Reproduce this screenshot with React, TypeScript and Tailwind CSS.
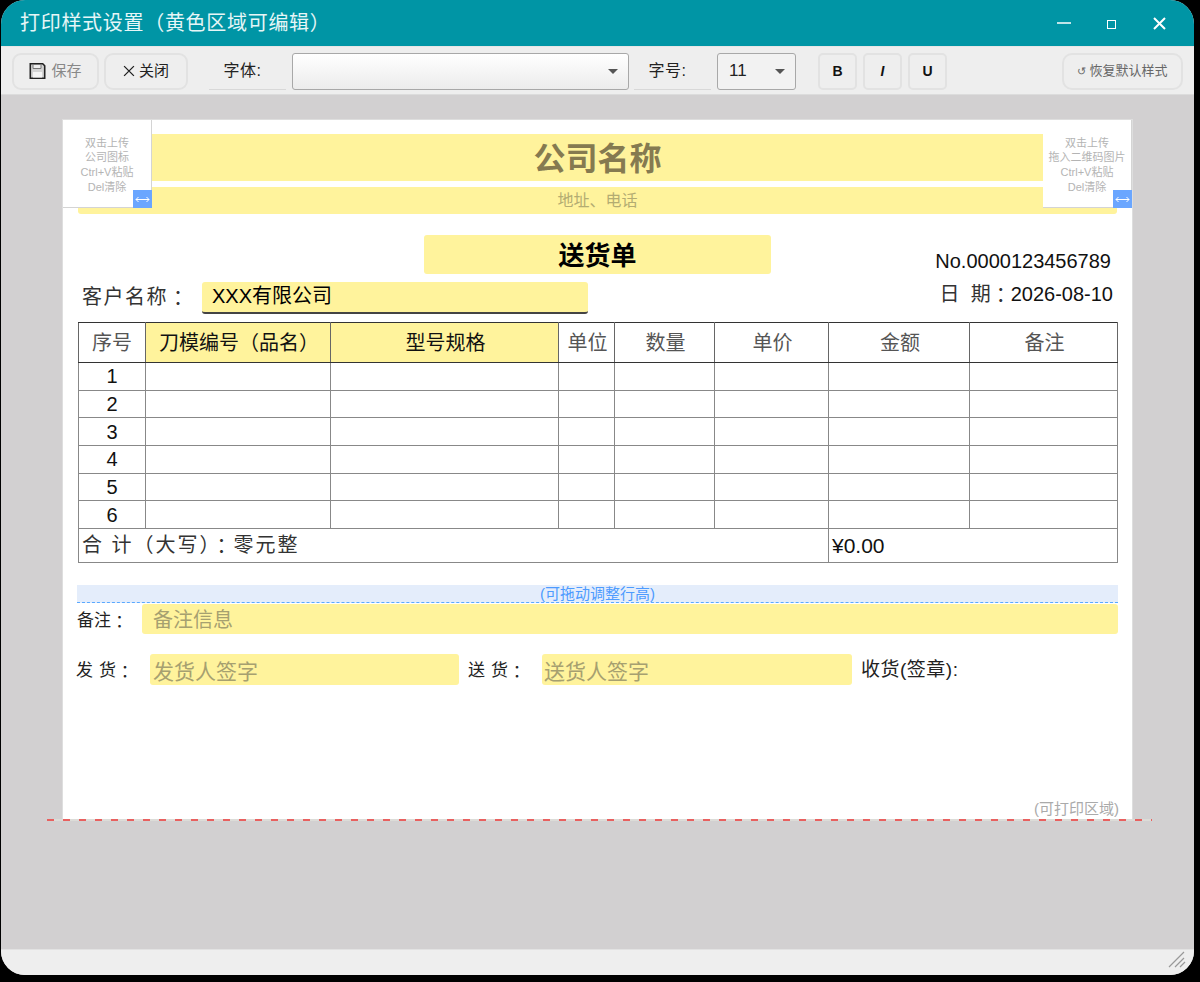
import React from 'react';

const cjk = "font-['Liberation_Sans','Noto_Sans_CJK_SC',sans-serif]";
const yellow = 'bg-[#fff39c]';

const columns = [67, 185, 228, 56, 100, 114, 141, 148];
const headers = ['序号', '刀模编号（品名）', '型号规格', '单位', '数量', '单价', '金额', '备注'];
const rows = [1, 2, 3, 4, 5, 6];

// the full-width colon sits in the middle of its box in the reference, as in the TC face
const Colon = () => <span className="align-[-2px] font-['Noto_Sans_CJK_TC',sans-serif]">：</span>;

const ToolLabel = ({ text }: { text: string }) => (
  <div className="flex h-[37px] w-[77px] items-center justify-center border-b border-[#d8d8d8] pr-[10px] text-[16px] tracking-[0.5px] text-[#222]">
    {text}
  </div>
);

const Caret = () => <span className="h-0 w-0 border-x-[5px] border-t-[5px] border-x-transparent border-t-[#555]" />;

const StyleButton = ({ text, className }: { text: string; className?: string }) => (
  <button className={`flex h-[37px] w-[39px] items-center justify-center rounded-[5px] border-2 border-[#e2e2e2] bg-[#eeeeee] text-[14px] font-bold text-[#111] ${className ?? ''}`}>
    {text}
  </button>
);

const UploadBox = ({ lines }: { lines: string[] }) => (
  <div className="relative flex h-[88px] w-[89px] flex-col items-center justify-center border-r border-b border-[#d4d4d4] bg-white pt-[3px] text-[11px] leading-[14.6px] text-[#b4b4b4]">
    {lines.map((line) => (
      <div key={line}>{line}</div>
    ))}
    <div className="absolute right-[-1px] bottom-[-1px] flex h-[18px] w-[19px] items-center justify-center bg-[#6aa6ff]">
      <svg width="15" height="7" viewBox="0 0 15 7" fill="none" stroke="white" strokeWidth="1">
        <path d="M1 3.5h13M3.5 1 1 3.5 3.5 6M11.500 1 14 3.500 11.500 6" />
      </svg>
    </div>
  </div>
);

const App: React.FC = () => {
  return (
    <div className={`h-[982px] w-[1200px] overflow-hidden bg-black pt-0 pr-[6px] pb-[7px] pl-px ${cjk}`}>
      <div className="flex h-full flex-col overflow-hidden rounded-t-[24px] rounded-b-[24px] bg-[#eeeeee]">
        {/* title bar */}
        <div className="flex h-[46px] shrink-0 items-center justify-between bg-[#0095a5] pl-[19px] text-white">
          <div className="text-[20px] tracking-[0.7px] text-[#e6f6f7]">打印样式设置（黄色区域可编辑）</div>
          <div className="flex items-center pr-[28px]">
            <svg width="14" height="2" viewBox="0 0 14 2">
              <path d="M0 1h14" stroke="white" strokeWidth="1.500" />
            </svg>
            <div className="mt-[3px] ml-[36px] h-[9px] w-[9px] border border-white" />
            <svg className="ml-[37px]" width="13" height="13" viewBox="0 0 13 13">
              <path d="M1 1l11 11M12 1 1 12" stroke="white" strokeWidth="2" />
            </svg>
          </div>
        </div>

        {/* toolbar */}
        <div className="flex h-[48px] shrink-0 items-center border-t border-[#e6e6e6] bg-[#eeeeee] pt-[1px] pl-[11px]">
          <button className="flex h-[37px] w-[87px] items-center justify-center gap-[5px] rounded-[9px] border-2 border-[#e2e2e2] text-[15px] text-[#888]">
            <svg width="17" height="16" viewBox="0 0 16 16">
              <path d="M.8.8h12.400l2 2v12.400H.8z" fill="#d4d4d4" stroke="#222" strokeWidth="1.600" />
              <path d="M3.500 1.500h8v4h-8z" fill="#efefef" stroke="#777" />
              <path d="M3.500 9h9v5.500h-9z" fill="#f4f4f4" />
            </svg>
            保存
          </button>
          <button className="ml-[5px] flex h-[37px] w-[84px] items-center justify-center gap-[4px] rounded-[9px] border-2 border-[#e2e2e2] text-[15px] text-[#222]">
            <svg width="12" height="12" viewBox="0 0 11 11">
              <path d="M1 1l9 9M10 1 1 10" stroke="#222" strokeWidth="1.200" />
            </svg>
            关闭
          </button>
          <div className="ml-[21px]">
            <ToolLabel text="字体:" />
          </div>
          <div className="ml-[6px] flex h-[37px] w-[337px] items-center justify-end rounded-[3px] border border-[#a8a8a8] bg-gradient-to-b from-white to-[#ececec] pr-[10px]">
            <Caret />
          </div>
          <div className="ml-[5px]">
            <ToolLabel text="字号:" />
          </div>
          <div className="ml-[6px] flex h-[37px] w-[79px] items-center justify-between rounded-[3px] border border-[#a8a8a8] bg-[#f2f2f2] pr-[10px] pl-[11px] text-[17px] text-[#222]">
            11
            <Caret />
          </div>
          <StyleButton text="B" className="ml-[22px]" />
          <StyleButton text="I" className="ml-[6px] italic" />
          <StyleButton text="U" className="ml-[6px]" />
          <button className="ml-[115px] flex h-[37px] w-[121px] items-center justify-center gap-[3px] rounded-[10px] border-2 border-[#e2e2e2] text-[13px] text-[#666]">
            <span className="text-[11px]">↺</span>
            恢复默认样式
          </button>
        </div>

        {/* canvas */}
        <div className="min-h-0 flex-1 border-t border-[#dcdcdc] bg-[#d2d0d1] pt-[25px] pl-[62px]">
          <div className="relative h-[700px] w-[1069px] bg-white shadow-[0_0_0_1px_#dedede]">
            {/* letterhead */}
            <div className="absolute top-0 left-0 z-10">
              <UploadBox lines={['双击上传', '公司图标', 'Ctrl+V粘贴', 'Del清除']} />
            </div>
            <div className="absolute top-0 right-0 z-10">
              <UploadBox lines={['双击上传', '拖入二维码图片', 'Ctrl+V粘贴', 'Del清除']} />
            </div>
            <div className="pt-[14px]">
              <div className={`mx-auto flex h-[47px] w-[892px] items-center justify-center pt-[2px] text-[32px] font-bold text-[#857a50] ${yellow}`}>
                公司名称
              </div>
              <div className={`mt-[6px] ml-[15px] flex h-[27px] w-[1039px] items-center justify-center rounded-b-[3px] pt-[1px] text-[16px] text-[#b3ac72] ${yellow}`}>
                地址、电话
              </div>
            </div>

            {/* title and numbers */}
            <div className="relative mt-[21px] h-[39px]">
              <div className={`ml-[361px] flex h-[39px] w-[347px] items-center justify-center rounded-[3px] pt-[3px] text-[26px] font-bold text-black ${yellow}`}>
                送货单
              </div>
              <div className="absolute top-[11px] right-[21px] text-[20px] leading-[30px] text-[#111]">No.0000123456789</div>
            </div>
            <div className="mt-[8px] flex h-[32px] items-start pr-[19px] pl-[19px]">
              <div className="w-[120px] pt-[1px] text-[20px] leading-[28px] tracking-[1.5px] text-[#333]">
                客户名称
                <Colon />
              </div>
              <div className={`flex h-[32px] w-[386px] items-center rounded-[3px] border-b-2 border-[#444] pb-[2px] pl-[10px] text-[20px] text-black ${yellow}`}>
                XXX有限公司
              </div>
              <div className="mt-[-2px] ml-auto text-[20px] leading-[28px] text-[#111]">
                <span className="text-[#333]">
                  日&nbsp;&nbsp;期
                  <Colon />
                </span>
                2026-08-10
              </div>
            </div>

            {/* table */}
            <table className="mt-[8px] ml-[15px] w-[1039px] table-fixed border-collapse text-center text-[20px]">
              <colgroup>
                {columns.map((w, i) => (
                  <col key={i} style={{ width: w }} />
                ))}
              </colgroup>
              <thead>
                <tr className="h-[40px]">
                  {headers.map((h, i) => (
                    <th
                      key={h}
                      className={`border-x border-y border-x-[#666] border-y-[#333] p-0 font-normal ${
                        i === 1 || i === 2 ? `${yellow} text-[#111]` : 'text-[#555]'
                      } ${i === 0 ? '' : 'pl-[2px]'}`}
                    >
                      {h}
                    </th>
                  ))}
                </tr>
              </thead>
              <tbody>
                {rows.map((n) => (
                  <tr key={n} className="h-[27.7px]">
                    <td className="border border-[#888] p-0 text-[20px] leading-[24px] text-[#111]">{n}</td>
                    {columns.slice(1).map((_, i) => (
                      <td key={i} className="border border-[#888] p-0" />
                    ))}
                  </tr>
                ))}
                <tr className="h-[34px]">
                  <td colSpan={6} className="border border-[#888] p-0 pl-[3px] text-left text-[20px] tracking-[2px] text-[#333]">
                    合 计（大写）
                    <Colon />
                    零元整
                  </td>
                  <td colSpan={2} className="border border-[#888] p-0 pl-[3px] text-left text-[21px] text-[#111]">
                    ¥0.00
                  </td>
                </tr>
              </tbody>
            </table>

            {/* remark */}
            <div className="mt-[22px] ml-[14px] flex h-[18px] w-[1041px] items-end justify-center border-b border-dashed border-[#5aa9ff] bg-[#e4edfb] text-[15px] leading-[16px] text-[#4d9bff]">
              (可拖动调整行高)
            </div>
            <div className="mt-[1px] ml-[14px] flex h-[30px] items-center">
              <div className="w-[65px] pt-[3px] text-[17px] text-[#222]">
                备注
                <Colon />
              </div>
              <div className={`flex h-[30px] w-[976px] items-center rounded-[3px] pt-[1px] pl-[11px] text-[20px] text-[#a6a070] ${yellow}`}>
                备注信息
              </div>
            </div>

            {/* signatures */}
            <div className="mt-[20px] ml-[13px] flex h-[31px] items-center text-[17px] text-[#222]">
              <div className="w-[74px] pt-[2px] tracking-[0.6px]">
                发 货
                <Colon />
              </div>
              <div className={`flex h-[31px] w-[309px] items-center rounded-[3px] pt-[5px] pl-[3px] text-[21px] text-[#a6a070] ${yellow}`}>
                发货人签字
              </div>
              <div className="ml-[9px] w-[74px] pt-[2px] tracking-[0.6px]">
                送 货
                <Colon />
              </div>
              <div className={`flex h-[31px] w-[310px] items-center rounded-[3px] pt-[5px] pl-[2px] text-[21px] text-[#a6a070] ${yellow}`}>
                送货人签字
              </div>
              <div className="ml-[9px] pt-[1px] text-[19px] tracking-[0.5px] text-[#222]">收货(签章):</div>
            </div>

            {/* print area marker */}
            <div className="absolute right-[13px] bottom-[1px] text-[15px] leading-[20px] text-[#aaaaaa]">(可打印区域)</div>
            <div className="absolute top-[699px] left-[-16px] h-[2px] w-[1105px] bg-[repeating-linear-gradient(90deg,#e8605f_0,#e8605f_7px,#dcdcd8_7px,#dcdcd8_16px)]" />
          </div>
        </div>

        {/* status bar */}
        <div className="relative h-[26px] shrink-0 border-t border-[#e2e2e2] bg-[#eeeeee]">
          <svg className="absolute right-[8px] bottom-[7px]" width="18" height="18" viewBox="0 0 18 18" fill="none" stroke="#999999" strokeWidth="1.200">
            <path d="M1 17 16 2M7 17 16 8M12 17l5-5" />
          </svg>
        </div>
      </div>
    </div>
  );
};

export default App;
